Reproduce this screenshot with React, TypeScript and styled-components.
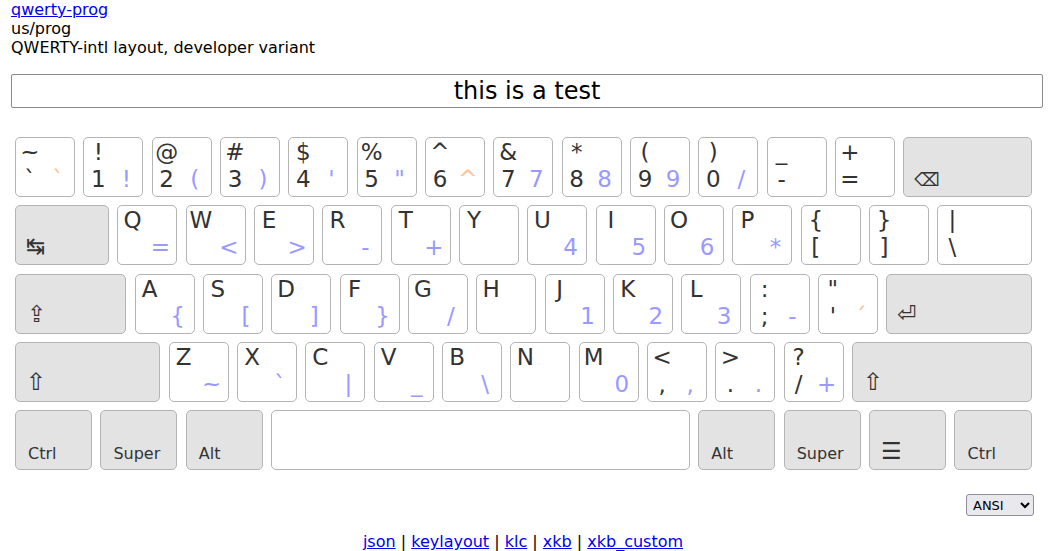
import React from "react";
import styled, { createGlobalStyle } from "styled-components";

const GlobalStyle = createGlobalStyle`
  body {
    margin: 0;
    background: #fff;
    color: #000;
    font-family: "DejaVu Sans", "Noto Sans", sans-serif;
  }
`;

const Page = styled.div`
  padding: 0 10px 0 11px;
`;

const Header = styled.header`
  font-size: 16px;
  a {
    color: #0000ee;
  }
`;

const TestInput = styled.input`
  display: block;
  box-sizing: border-box;
  width: 100%;
  height: 34px;
  margin: 17px 0 0;
  padding: 0;
  border: 1px solid #8a8a8a;
  border-radius: 2px;
  font-family: inherit;
  font-size: 24px;
  text-align: center;
  color: #000;
`;

const Board = styled.div`
  width: 1016px;
  margin: 29px 0 0 4px;
`;

const Keys = styled.div`
  display: flex;
  flex-direction: column;
  gap: 8.33px;
`;

const Row = styled.div`
  display: flex;
  gap: 8.33px;
`;

const Key = styled.div<{ $w: number; $mod?: boolean }>`
  box-sizing: border-box;
  flex: none;
  width: calc(68.33px * ${(p) => p.$w} - 8.33px);
  height: 60px;
  border: 1px solid #b4b4b4;
  border-radius: 5px;
  background: ${(p) => (p.$mod ? "#e3e3e3" : "#fff")};
  color: #333;
`;

const CharGrid = styled.div`
  display: grid;
  grid-template-columns: 28px 28px;
  grid-template-rows: 27px 27px;
  padding-top: 1px;
`;

const Char = styled.span<{ $kind: "level" | "alt" | "dead"; $row: number; $col: number }>`
  grid-row: ${(p) => p.$row};
  grid-column: ${(p) => p.$col};
  text-align: center;
  font-size: 23px;
  line-height: 27px;
  color: ${(p) => (p.$kind === "alt" ? "#9999ff" : p.$kind === "dead" ? "#f7c39b" : "#333")};
`;

const ModLabel = styled.div`
  box-sizing: border-box;
  height: 100%;
  display: flex;
  align-items: flex-end;
  padding: 0 0 6.5px 12px;
  font-size: 16px;
  line-height: 18px;
  color: #333;
`;

const Sym = styled.span<{ $size: number; $shift: number }>`
  font-size: ${(p) => p.$size}px;
  margin-left: ${(p) => p.$shift}px;
`;

const SelectRow = styled.div`
  display: flex;
  justify-content: flex-end;
  margin: 24px -3px 0 0;
`;

const Select = styled.select`
  box-sizing: border-box;
  width: 68px;
  height: 22px;
  padding: 0 2px;
  border: 1px solid #8f8f9d;
  border-radius: 3px;
  background-color: #e9e9ed;
  color: #000;
  font-family: "DejaVu Sans", sans-serif;
  font-size: 13px;
`;

const Footer = styled.footer`
  margin-top: 16px;
  text-align: center;
  font-size: 16px;
  a {
    color: #0000ee;
  }
`;

type KeyDef = {
  s?: string;
  b?: string;
  a?: string;
  dead?: boolean;
  w?: number;
  mod?: boolean;
  label?: string;
  sym?: string;
  size?: number;
  shift?: number;
};

const letter = (s: string, a?: string): KeyDef => ({ s, a });

const rows: KeyDef[][] = [
  [
    { s: "~", b: "`", a: "`", dead: true },
    { s: "!", b: "1", a: "!" },
    { s: "@", b: "2", a: "(" },
    { s: "#", b: "3", a: ")" },
    { s: "$", b: "4", a: "'" },
    { s: "%", b: "5", a: '"' },
    { s: "^", b: "6", a: "^", dead: true },
    { s: "&", b: "7", a: "7" },
    { s: "*", b: "8", a: "8" },
    { s: "(", b: "9", a: "9" },
    { s: ")", b: "0", a: "/" },
    { s: "_", b: "-" },
    { s: "+", b: "=" },
    { w: 2, mod: true, sym: "⌫", size: 18, shift: -2 },
  ],
  [
    { w: 1.5, mod: true, sym: "↹", size: 23, shift: -2 },
    letter("Q", "="),
    letter("W", "<"),
    letter("E", ">"),
    letter("R", "-"),
    letter("T", "+"),
    letter("Y"),
    letter("U", "4"),
    letter("I", "5"),
    letter("O", "6"),
    letter("P", "*"),
    { s: "{", b: "[" },
    { s: "}", b: "]" },
    { s: "|", b: "\\", w: 1.5 },
  ],
  [
    { w: 1.75, mod: true, sym: "⇪", size: 23, shift: -1 },
    letter("A", "{"),
    letter("S", "["),
    letter("D", "]"),
    letter("F", "}"),
    letter("G", "/"),
    letter("H"),
    letter("J", "1"),
    letter("K", "2"),
    letter("L", "3"),
    { s: ":", b: ";", a: "-" },
    { s: '"', b: "'", a: "´", dead: true },
    { w: 2.25, mod: true, sym: "⏎", size: 23, shift: -2 },
  ],
  [
    { w: 2.25, mod: true, sym: "⇧", size: 24, shift: -2 },
    letter("Z", "~"),
    letter("X", "`"),
    letter("C", "|"),
    letter("V", "_"),
    letter("B", "\\"),
    letter("N"),
    letter("M", "0"),
    { s: "<", b: ",", a: "," },
    { s: ">", b: ".", a: "." },
    { s: "?", b: "/", a: "+" },
    { w: 2.75, mod: true, sym: "⇧", size: 24, shift: -2 },
  ],
  [
    { w: 1.25, mod: true, label: "Ctrl" },
    { w: 1.25, mod: true, label: "Super" },
    { w: 1.25, mod: true, label: "Alt" },
    { w: 6.25 },
    { w: 1.25, mod: true, label: "Alt" },
    { w: 1.25, mod: true, label: "Super" },
    { w: 1.25, mod: true, sym: "☰", size: 23, shift: -1 },
    { w: 1.25, mod: true, label: "Ctrl" },
  ],
];

function KeyCap({ k }: { k: KeyDef }) {
  if (k.mod) {
    return (
      <Key $w={k.w ?? 1} $mod>
        <ModLabel>
          <div>
            {k.label}
            {k.sym && (
              <Sym $size={k.size ?? 16} $shift={k.shift ?? 0}>
                {k.sym}
              </Sym>
            )}
          </div>
        </ModLabel>
      </Key>
    );
  }
  return (
    <Key $w={k.w ?? 1}>
      <CharGrid>
        {k.s && (
          <Char $kind="level" $row={1} $col={1}>
            {k.s}
          </Char>
        )}
        {k.b && (
          <Char $kind="level" $row={2} $col={1}>
            {k.b}
          </Char>
        )}
        {k.a && (
          <Char $kind={k.dead ? "dead" : "alt"} $row={2} $col={2}>
            {k.a}
          </Char>
        )}
      </CharGrid>
    </Key>
  );
}

export default function App() {
  return (
    <Page>
      <GlobalStyle />
      <Header>
        <a href="#">qwerty-prog</a>
        <div>us/prog</div>
        <div>QWERTY-intl layout, developer variant</div>
      </Header>
      <TestInput defaultValue="this is a test" />
      <Board>
        <Keys>
          {rows.map((row, i) => (
            <Row key={i}>
              {row.map((k, j) => (
                <KeyCap key={j} k={k} />
              ))}
            </Row>
          ))}
        </Keys>
        <SelectRow>
          <Select defaultValue="ANSI">
            <option>ANSI</option>
            <option>ISO</option>
            <option>ABNT</option>
            <option>JIS</option>
            <option>ALT</option>
          </Select>
        </SelectRow>
        <Footer>
          <a href="#">json</a> | <a href="#">keylayout</a> | <a href="#">klc</a> |{" "}
          <a href="#">xkb</a> | <a href="#">xkb_custom</a>
        </Footer>
      </Board>
    </Page>
  );
}
